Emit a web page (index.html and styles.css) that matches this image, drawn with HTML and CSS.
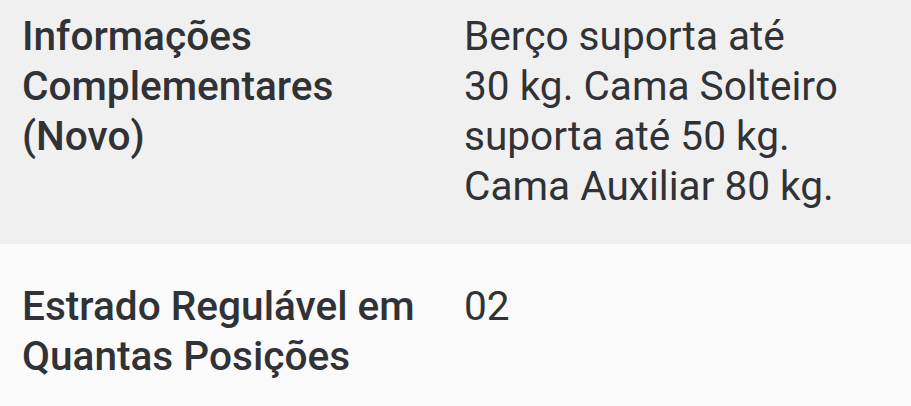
FILE: index.html
```html
<!DOCTYPE html>
<html lang="pt-BR">

<head>
    <meta charset="UTF-8">
    <meta name="viewport" content="width=device-width, initial-scale=1.0">
    <title>Especificações</title>
    <link rel="stylesheet" href="styles.css">
</head>

<body>
    <div class="specs">
        <div class="spec_row spec_row--first">
            <div class="spec_label">Informações Complementares (Novo)</div>
            <div class="spec_value">Berço suporta até 30 kg. Cama Solteiro suporta até 50 kg. Cama Auxiliar 80 kg.</div>
        </div>
        <div class="spec_row">
            <div class="spec_label">Estrado Regulável em Quantas Posições</div>
            <div class="spec_value">02</div>
        </div>
    </div>
</body>

</html>
```

FILE: styles.css
```css
/* Reset some default browser styles */
body,
html {
    margin: 0;
    padding: 0;
    font-family: Roboto, 'Noto Sans', sans-serif;
    background-color: #fafafa;
    overflow: hidden;
}

.specs {
    width: 100%;
}

.spec_row {
    display: grid;
    grid-template-columns: 420px 376px;
    column-gap: 22px;
    padding: 37px 22px 33px;
    font-size: 40.6px;
    line-height: 50px;
    color: #303235;
}

.spec_row:nth-child(odd) {
    background-color: #f0f0f0;
}

.spec_row--first {
    padding-top: 11px;
}

.spec_label {
    font-weight: 500;
}

.spec_value {
    font-weight: 400;
}
```
